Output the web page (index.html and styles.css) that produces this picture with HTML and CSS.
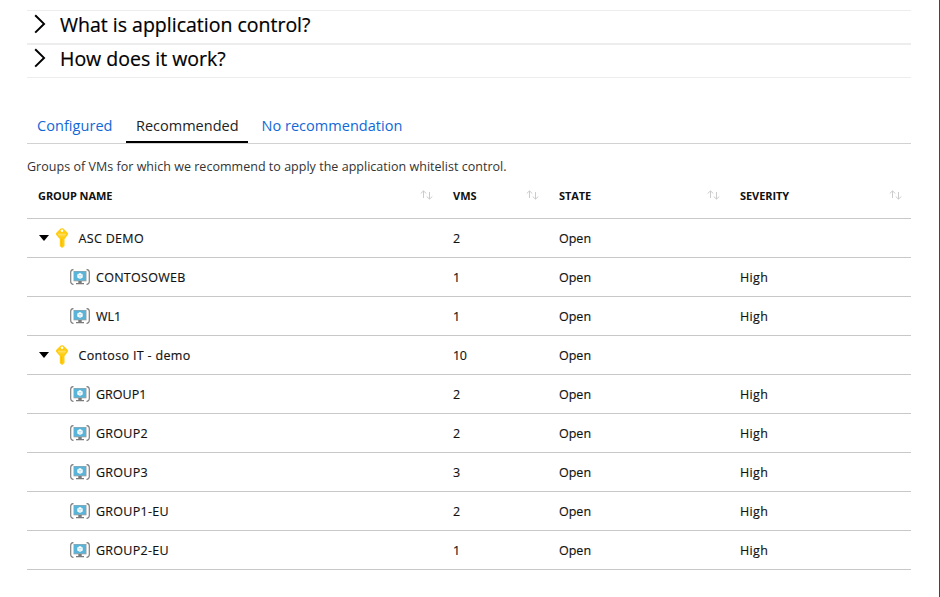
FILE: index.html
```html
<!DOCTYPE html>
<html lang="en">
<head>
<meta charset="utf-8">
<title>Application control</title>
<link rel="stylesheet" href="styles.css">
</head>
<body>
<svg class="defs" width="0" height="0" aria-hidden="true">
  <symbol id="chevron" viewBox="0 0 12 20"><path d="M1.200 1.200 10 9.900 1.200 18.600" fill="none" stroke="#000" stroke-width="2"/></symbol>
  <symbol id="sort" viewBox="0 0 13 10"><path d="M3.500 8V1M.7 3.500 3.500.9l2.800 2.600M9.500 2v7M6.700 6.500l2.800 2.600 2.800-2.600" fill="none" stroke="#ccc" stroke-width="1"/></symbol>
  <symbol id="key" viewBox="0 0 14 20"><path fill="#fc1" fill-rule="evenodd" d="M5.700.6Q7-.3 8.300.6L12.400 4.400Q13.600 5.600 12.700 7L10.200 10.200 9.500 11V18L7 20 4.800 18V11L4.100 10.200 1.300 7Q.4 5.600 1.600 4.400ZM7 1.500a1.300 1.300 0 1 0 0 2.600 1.300 1.300 0 0 0 0-2.600Z"/><path fill="#ffe27a" d="M3 5.700h8v1H3zM3.700 7.400h6.600v.8H3.700z"/><path fill="#f2bb00" d="M6.300 11h.8v7.500l-.8-.6z"/></symbol>
  <symbol id="vm" viewBox="0 0 20 16"><path d="M3.500.7H3Q.7 1 .7 3.500V12.500Q.7 15 3 15.300H3.500M16.500.7H17Q19.300 1 19.300 3.500V12.500Q19.300 15 17 15.300H16.500" fill="none" stroke="#808080" stroke-width="1.200"/><path fill="#a0a1a2" d="M3.500 2h13v10.300h-13z"/><path fill="#7a7a7a" d="M8.300 12h3.400v2H14v1.300H6V14h2.300z"/><path fill="#59b4d9" d="M4 2.500h12v9H4z"/><path fill="#fff" d="m10 4 2.700 1.400v3L10 9.900 7.300 8.400v-3z"/><path d="m7.500 5.500 2.500 1.300 2.500-1.300M10 6.800v3" fill="none" stroke="#9ed2e8" stroke-width=".6"/></symbol>
</svg>
<main class="blade">
  <section class="faq">
    <div class="faq-item"><svg class="chevron"><use href="#chevron"/></svg><span>What is application control?</span></div>
    <div class="faq-item"><svg class="chevron"><use href="#chevron"/></svg><span>How does it work?</span></div>
  </section>
  <nav class="tabs">
    <a class="tab t1">Configured</a>
    <a class="tab t2 active">Recommended</a>
    <a class="tab t3">No recommendation</a>
  </nav>
  <p class="intro">Groups of VMs for which we recommend to apply the application whitelist control.</p>
  <div class="grid">
    <div class="row head">
      <div><span>GROUP NAME</span><svg class="sort"><use href="#sort"/></svg></div>
      <div><span>VMS</span><svg class="sort"><use href="#sort"/></svg></div>
      <div><span>STATE</span><svg class="sort"><use href="#sort"/></svg></div>
      <div><span>SEVERITY</span><svg class="sort"><use href="#sort"/></svg></div>
    </div>
    <div class="row group"><div><i class="caret"></i><svg class="key"><use href="#key"/></svg><span>ASC DEMO</span></div><div>2</div><div>Open</div><div></div></div>
    <div class="row"><div><svg class="vm"><use href="#vm"/></svg><span class="wide">CONTOSOWEB</span></div><div>1</div><div>Open</div><div>High</div></div>
    <div class="row"><div><svg class="vm"><use href="#vm"/></svg><span>WL1</span></div><div>1</div><div>Open</div><div>High</div></div>
    <div class="row group"><div><i class="caret"></i><svg class="key"><use href="#key"/></svg><span>Contoso IT - demo</span></div><div>10</div><div>Open</div><div></div></div>
    <div class="row"><div><svg class="vm"><use href="#vm"/></svg><span>GROUP1</span></div><div>2</div><div>Open</div><div>High</div></div>
    <div class="row"><div><svg class="vm"><use href="#vm"/></svg><span class="wide">GROUP2</span></div><div>2</div><div>Open</div><div>High</div></div>
    <div class="row"><div><svg class="vm"><use href="#vm"/></svg><span class="wide">GROUP3</span></div><div>3</div><div>Open</div><div>High</div></div>
    <div class="row"><div><svg class="vm"><use href="#vm"/></svg><span class="wide">GROUP1-EU</span></div><div>2</div><div>Open</div><div>High</div></div>
    <div class="row"><div><svg class="vm"><use href="#vm"/></svg><span class="wide">GROUP2-EU</span></div><div>1</div><div>Open</div><div>High</div></div>
  </div>
</main>
</body>
</html>
```
FILE: styles.css
```css
* { box-sizing: border-box; }
body { margin: 0; background: #fff; color: #111; font: 13px/18px "Open Sans", "Noto Sans", sans-serif; }
.defs { display: block; height: 0; }
svg { flex: none; }
.blade { height: 597px; padding: 10px 28px 0 27px; border-right: 1px solid #1f4e79; overflow: hidden; white-space: nowrap; }
.faq { border-top: 1px solid #ededed; border-bottom: 1px solid #ededed; }
.faq-item { display: flex; align-items: center; height: 32px; padding: 0 0 4px 7px; color: #000; font-size: 19.500px; line-height: 28px; -webkit-text-stroke: .2px #000; }
.faq-item + .faq-item { height: 34px; border-top: 2px solid #ededed; }
.chevron { width: 12px; height: 20px; margin: -2px 14px 0 0; }
.tabs { display: flex; height: 36px; margin-top: 30px; border-bottom: 1px solid #d2d2d2; font-size: 14.500px; line-height: 36px; }
.tab { height: 35px; padding: 0 10px; color: #1068d8; }
.t1 { width: 99px; letter-spacing: .05px; }
.t2 { width: 122px; }
.t3 { padding-left: 13.500px; letter-spacing: .03px; }
.active { color: #222; border-bottom: 2px solid #000; }
.intro { margin: 13px 0 0; font-size: 12.500px; line-height: 20px; letter-spacing: .025px; color: #333; }
.row { display: grid; grid-template-columns: 415px 106px 181px 182px; height: 39px; border-bottom: 1px solid #c8c8c8; }
.row > div { display: flex; align-items: center; padding: 2px 0 0 11px; font-size: 12.500px; -webkit-text-stroke: .15px #111; }
.row > div:nth-child(2) { letter-spacing: -.5px; }
.row > div:nth-child(4) { letter-spacing: .35px; }
.row > div:first-child { padding-left: 43px; }
.row.group > div:first-child { padding-left: 11px; letter-spacing: .33px; }
.wide { letter-spacing: .28px; }
.row.head { height: 42px; padding-bottom: 4px; }
.row.head > div, .row.head > div:first-child { padding: 0 9.500px 0 11px; font-size: 11px; font-weight: 700; letter-spacing: -.08px; -webkit-text-stroke: 0; }
.row.head > div:nth-child(2) { letter-spacing: 0; }
.row.head > div:nth-child(4) { letter-spacing: -.08px; }
.sort { width: 13px; height: 10px; margin: -2px 0 0 auto; }
.caret { border: 5.500px solid transparent; border-top: 6px solid #000; border-bottom: 0; margin: -2px 0 0 1px; }
.key { width: 14px; height: 20px; margin: -2px 9.500px 0 6px; }
.vm { width: 20px; height: 16px; margin: -2px 6px 0 0; }
```
